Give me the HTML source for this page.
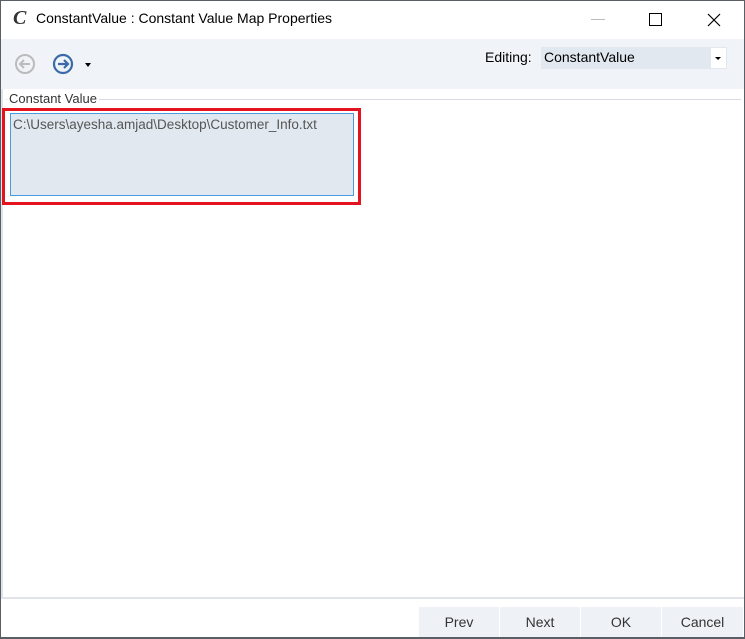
<!DOCTYPE html>
<html><head><style>
body{margin:0;width:745px;height:639px;overflow:hidden;background:#fff;font-family:"Segoe UI","Liberation Sans",sans-serif;position:relative}
.a{position:absolute}
</style></head><body>
<div class="a" style="left:0;top:0;width:745px;height:639px;box-sizing:border-box;border:1px solid #5a5f66;border-bottom:2px solid #5a5f66"></div>
<div class="a" style="left:13px;top:7px;font:italic bold 20px 'Liberation Serif',serif;color:#333">C</div>
<div class="a" style="left:36px;top:10px;font-size:14px;color:#000">ConstantValue : Constant Value Map Properties</div>
<div class="a" style="left:591px;top:19px;width:14px;height:1px;background:#bbb"></div>
<div class="a" style="left:649px;top:13px;width:11px;height:11px;border:1px solid #000"></div>
<svg class="a" style="left:707px;top:13px" width="14" height="14"><path d="M1 1L13 13M13 1L1 13" stroke="#000" stroke-width="1.2"/></svg>
<div class="a" style="left:1px;top:39px;width:743px;height:50px;background:#f0f4f8"></div>
<svg class="a" style="left:14px;top:53px" width="22" height="22"><circle cx="11" cy="11" r="9" fill="none" stroke="#bbb" stroke-width="2"/><path d="M16 11H7M10 7L6 11L10 15" fill="none" stroke="#bbb" stroke-width="2"/></svg>
<svg class="a" style="left:52px;top:53px" width="22" height="22"><circle cx="11" cy="11" r="9" fill="none" stroke="#3c6aa8" stroke-width="2.2"/><path d="M6 11H15M12 7L16 11L12 15" fill="none" stroke="#3c6aa8" stroke-width="2.2"/></svg>
<div class="a" style="left:85px;top:63px;border:3px solid transparent;border-top:4px solid #000"></div>
<div class="a" style="left:485px;top:49px;font-size:14px;color:#000">Editing:</div>
<div class="a" style="left:541px;top:47px;width:186px;height:22px;background:#e1e8f0"></div>
<div class="a" style="left:544px;top:49px;font-size:14px;color:#000">ConstantValue</div>
<div class="a" style="left:711px;top:48px;width:15px;height:20px;background:#fff"></div>
<div class="a" style="left:715px;top:57px;border:3px solid transparent;border-top:3px solid #000"></div>
<div class="a" style="left:1px;top:89px;width:743px;height:510px;box-sizing:border-box;border-bottom:2px solid #e0e4ea;border-left:2px solid #e0e4ea"></div>
<div class="a" style="left:6px;top:99px;width:735px;height:1px;background:#d8dce2"></div>
<div class="a" style="left:7px;top:91px;font-size:13px;color:#333;background:#fff;padding:0 2px">Constant Value</div>
<div class="a" style="left:2px;top:108px;width:359px;height:97px;box-sizing:border-box;border:3px solid #e3141f"></div>
<div class="a" style="left:10px;top:113px;width:344px;height:83px;box-sizing:border-box;border:1px solid #4a9be0;background:#e1e8f0"></div>
<div class="a" style="left:13px;top:117px;font:13.5px 'Liberation Sans',sans-serif;color:#555">C:\Users\ayesha.amjad\Desktop\Customer_Info.txt</div>
<div class="a" style="left:419px;top:607px;width:324px;height:30px;background:#eef2f7;display:flex;font:14px 'Liberation Sans',sans-serif;color:#333">
<div style="width:80px;border-right:1px solid #fff;text-align:center;line-height:30px">Prev</div>
<div style="width:80px;border-right:1px solid #fff;text-align:center;line-height:30px">Next</div>
<div style="width:80px;border-right:1px solid #fff;text-align:center;line-height:30px">OK</div>
<div style="width:81px;text-align:center;line-height:30px">Cancel</div>
</div>
</body></html>
